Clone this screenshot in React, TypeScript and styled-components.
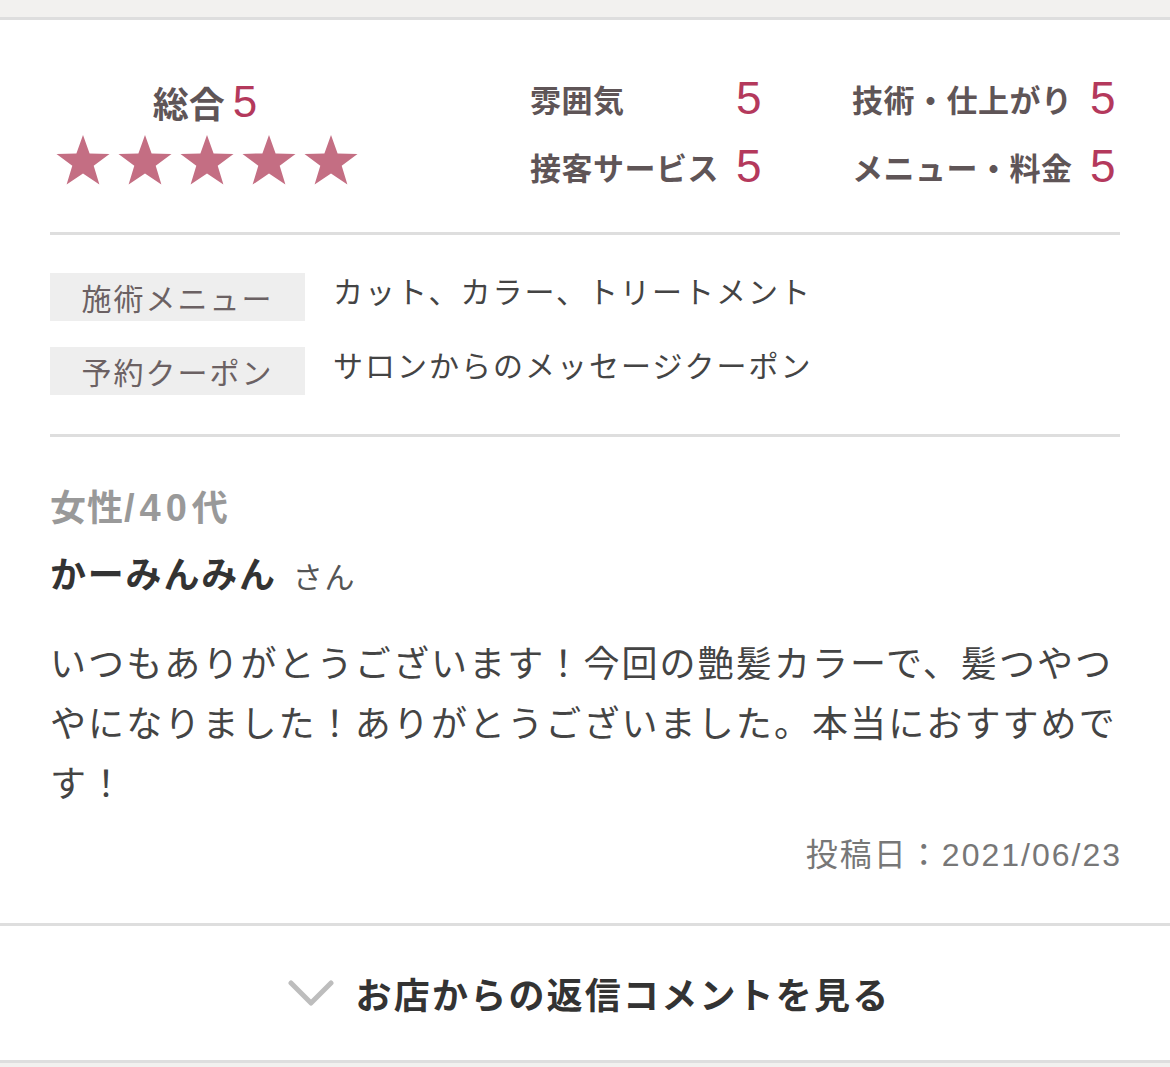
import React from 'react';
import styled, { createGlobalStyle } from 'styled-components';

const colors = {
  band: '#f2f1ef',
  line: '#dedede',
  heading: '#5f5557',
  accent: '#b4395c',
  star: '#c46e83',
  chip: '#eeeeee',
  chipText: '#6b6163',
  text: '#444444',
  muted: '#999999',
  date: '#777777',
};

const GlobalStyle = createGlobalStyle`
  body {
    margin: 0;
    background: #fff;
    font-family: "Liberation Sans", "Noto Sans CJK JP", "Noto Sans", sans-serif;
    color: ${colors.text};
  }
`;

const TopBand = styled('div')`
  height: 17px;
  background: ${colors.band};
  border-bottom: 3px solid ${colors.line};
`;

const BottomBand = styled('div')`
  height: 4px;
  background: ${colors.band};
  border-top: 3px solid ${colors.line};
`;

const Card = styled('article')`
  padding: 0 50px;
`;

const Section = styled('section')<{ pad: string; divider?: boolean }>`
  padding: ${(p) => p.pad};
  border-bottom: ${(p) => (p.divider ? `3px solid ${colors.line}` : 'none')};
`;

const Summary = styled('div')`
  display: flex;
  align-items: flex-start;
`;

const Overall = styled('div')`
  width: 310px;
  display: flex;
  flex-direction: column;
  align-items: center;
`;

const OverallTitle = styled('div')`
  display: flex;
  align-items: center;
  gap: 8px;
  height: 40px;
  font-size: 36px;
  font-weight: 700;
  color: ${colors.heading};
`;

const Score = styled('span')<{ size: number }>`
  font-family: "Liberation Sans", Arial, sans-serif;
  font-size: ${(p) => p.size}px;
  font-weight: 400;
  color: ${colors.accent};
  line-height: 1;
`;

const Stars = styled('div')`
  display: flex;
  gap: 8px;
  margin-top: 13px;
  margin-left: 4px;
  svg {
    width: 54px;
    height: 50px;
  }
`;

const RatingGrid = styled('div')`
  margin-left: auto;
  margin-right: 4px;
  margin-top: -8px;
  display: grid;
  grid-template-columns: 232px 264px;
  column-gap: 90px;
  row-gap: 20px;
`;

const RatingItem = styled('div')`
  display: flex;
  align-items: center;
  justify-content: space-between;
  height: 48px;
  font-size: 31px;
  font-weight: 700;
  letter-spacing: 0.5px;
  color: ${colors.heading};
`;

const InfoRow = styled('div')`
  display: flex;
  align-items: flex-start;
  gap: 28px;
  & + & {
    margin-top: 26px;
  }
`;

const Chip = styled('div')`
  width: 255px;
  height: 48px;
  flex-shrink: 0;
  display: flex;
  align-items: center;
  justify-content: center;
  background: ${colors.chip};
  color: ${colors.chipText};
  font-size: 30px;
  letter-spacing: 2px;
  box-sizing: border-box;
`;

const InfoValue = styled('div')`
  font-size: 30px;
  letter-spacing: 2px;
  line-height: 40px;
  color: ${colors.text};
`;

const Profile = styled('div')`
  font-size: 36px;
  font-weight: 700;
  line-height: 48px;
  letter-spacing: 1px;
  color: ${colors.muted};
  b {
    font-size: 38px;
    letter-spacing: 5px;
  }
`;

const Name = styled('div')`
  margin-top: 19px;
  font-size: 36px;
  font-weight: 700;
  line-height: 48px;
  color: #333;
  letter-spacing: 1.8px;
  span {
    margin-left: 16px;
    font-size: 30px;
    font-weight: 400;
    color: #555;
  }
`;

const Body = styled('p')`
  margin: 33px 0 0;
  font-size: 36px;
  line-height: 60px;
  letter-spacing: 2.1px;
  color: ${colors.text};
`;

const PostedAt = styled('div')`
  margin-top: 18px;
  text-align: right;
  font-size: 32px;
  line-height: 44px;
  letter-spacing: 2px;
  margin-right: -2px;
  color: ${colors.date};
`;

const ReplyToggle = styled('button')`
  width: 100%;
  height: 134px;
  border: none;
  background: #fff;
  display: flex;
  align-items: center;
  justify-content: center;
  gap: 22px;
  font-family: inherit;
  font-size: 36px;
  font-weight: 700;
  letter-spacing: 2.2px;
  color: #333;
  padding: 0 0 0 4px;
  border-top: 3px solid ${colors.line};
  box-sizing: content-box;
  svg {
    width: 46px;
    height: 28px;
  }
`;

const Star = () => (
  <svg viewBox="0 0 54 50">
    <polygon
      fill={colors.star}
      points="27,0 33.6,18.4 53.5,18.9 37.7,30.8 43.4,49.6 27,38.5 10.6,49.6 16.3,30.8 0.5,18.9 20.4,18.4"
    />
  </svg>
);

const Chevron = () => (
  <svg viewBox="0 0 46 28">
    <polyline points="3,4 23,24 43,4" fill="none" stroke="#bdbdbd" strokeWidth="5" strokeLinecap="round" strokeLinejoin="round" />
  </svg>
);

const ratings = [
  { label: '雰囲気', score: 5 },
  { label: '技術・仕上がり', score: 5 },
  { label: '接客サービス', score: 5 },
  { label: 'メニュー・料金', score: 5 },
];

const info = [
  { label: '施術メニュー', value: 'カット、カラー、トリートメント' },
  { label: '予約クーポン', value: 'サロンからのメッセージクーポン' },
];

export default function App() {
  return (
    <>
      <GlobalStyle />
      <TopBand />
      <Card>
        <Section pad="62px 0 42px" divider>
          <Summary>
            <Overall>
              <OverallTitle>
                総合<Score size={44}>5</Score>
              </OverallTitle>
              <Stars>
                {[0, 1, 2, 3, 4].map((i) => (
                  <Star key={i} />
                ))}
              </Stars>
            </Overall>
            <RatingGrid>
              {ratings.map((r) => (
                <RatingItem key={r.label}>
                  {r.label}
                  <Score size={46}>{r.score}</Score>
                </RatingItem>
              ))}
            </RatingGrid>
          </Summary>
        </Section>
        <Section pad="38px 0 39px" divider>
          {info.map((row) => (
            <InfoRow key={row.label}>
              <Chip>{row.label}</Chip>
              <InfoValue>{row.value}</InfoValue>
            </InfoRow>
          ))}
        </Section>
        <Section pad="47px 0 46px">
          <Profile>
            女性<b>/40</b>代
          </Profile>
          <Name>
            かーみんみん<span>さん</span>
          </Name>
          <Body>
            いつもありがとうございます！今回の艶髪カラーで、髪つやつやになりました！ありがとうございました。本当におすすめです！
          </Body>
          <PostedAt>投稿日：2021/06/23</PostedAt>
        </Section>
      </Card>
      <ReplyToggle>
        <Chevron />
        お店からの返信コメントを見る
      </ReplyToggle>
      <BottomBand />
    </>
  );
}
